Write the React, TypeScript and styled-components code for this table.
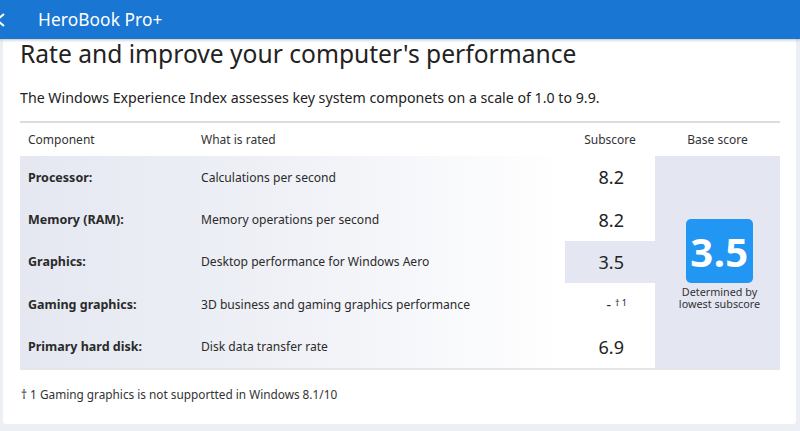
import React from "react";
import styled, { createGlobalStyle } from "styled-components";

const Global = createGlobalStyle`
  html, body { margin: 0; padding: 0; }
  body {
    background: #eceff3;
    font-family: "Noto Sans", "Open Sans", sans-serif;
    color: #222;
    width: 800px;
    height: 431px;
    overflow: hidden;
  }
`;

const Page = styled.div`
  position: relative;
  width: 800px;
  height: 431px;
  display: flex;
  flex-direction: column;
`;

const Header = styled.header`
  position: relative;
  z-index: 2;
  height: 39px;
  background: #1976d2;
  display: flex;
  align-items: center;
  color: #fff;
  box-shadow: 0 1px 3px rgba(0,0,0,0.25);
  flex-shrink: 0;
  overflow: hidden;
`;

const Back = styled.svg`
  width: 12px;
  height: 14px;
  margin-left: -6px;
  margin-right: 32px;
  flex-shrink: 0;
`;

const HeaderTitle = styled.h1`
  margin: 0;
  font-size: 17.3px;
  font-weight: 400;
  letter-spacing: 0.1px;
`;

const Card = styled.main`
  margin: 0 4px 7px 3px;
  background: #fff;
  border-radius: 0 0 3px 3px;
  flex: 1;
  padding: 0 16px 0 17px;
  display: flex;
  flex-direction: column;
`;

const Title = styled.h2`
  margin: 0;
  font-size: 24.6px;
  font-weight: 400;
  line-height: 30px;
  color: #222;
`;

const Lead = styled.p`
  margin: 20px 0 0;
  font-size: 14.2px;
  line-height: 18px;
  color: #222;
`;

const Table = styled.div`
  margin-top: 14px;
  border-top: 2px solid #dcdcdc;
  border-bottom: 2px solid #e6e6e6;
  display: grid;
  grid-template-columns: 173px 372px 90px 125px;
  width: 760px;
`;

const HeadCell = styled.div<{ $center?: boolean }>`
  height: 33px;
  display: flex;
  align-items: center;
  justify-content: ${p => (p.$center ? "center" : "flex-start")};
  padding-left: ${p => (p.$center ? "0" : "8px")};
  font-size: 12px;
  color: #333;
`;

const Body = styled.div`
  grid-column: 1 / 3;
  display: grid;
  grid-template-columns: 173px 372px;
  background: linear-gradient(to right, #e5e8f1 0%, #eef0f6 45%, #ffffff 100%);
`;

const NameCell = styled.div`
  height: 42.4px;
  display: flex;
  align-items: center;
  padding-left: 8px;
  font-size: 12.5px;
  font-weight: 700;
  color: #2a2a2a;
`;

const DescCell = styled.div`
  height: 42.4px;
  display: flex;
  align-items: center;
  padding-left: 8px;
  font-size: 12.1px;
  color: #2a2a2a;
`;

const ScoreCol = styled.div`
  display: flex;
  flex-direction: column;
`;

const ScoreCell = styled.div<{ $hl?: boolean }>`
  height: 42.4px;
  display: flex;
  align-items: center;
  justify-content: flex-end;
  padding-right: 31px;
  font-size: 18px;
  color: #222;
  background: ${p => (p.$hl ? "#e4e6f1" : "transparent")};
`;

const Sup = styled.sup`
  font-size: 9px;
  margin-left: 4px;
  margin-right: -3px;
  position: relative;
  top: -2px;
`;

const Dash = styled.span`
  font-size: 14px;
`;

const BaseCol = styled.div`
  background: #e4e6f1;
  display: flex;
  flex-direction: column;
  align-items: center;
  justify-content: center;
  padding: 5px 0 0 4px;
`;

const Badge = styled.div`
  width: 67px;
  height: 64px;
  border-radius: 5px;
  background: #2196f3;
  color: #fff;
  display: flex;
  align-items: center;
  justify-content: center;
  font-size: 40px;
  font-weight: 700;
  letter-spacing: 0.5px;
`;

const BaseNote = styled.div`
  margin-top: 3px;
  font-size: 10.8px;
  line-height: 11.5px;
  text-align: center;
  color: #333;
`;

const Footnote = styled.p`
  margin: 16px 0 0 1px;
  font-size: 11.8px;
  color: #333;
`;

const rows = [
  { name: "Processor:", desc: "Calculations per second", score: "8.2" },
  { name: "Memory (RAM):", desc: "Memory operations per second", score: "8.2" },
  { name: "Graphics:", desc: "Desktop performance for Windows Aero", score: "3.5", hl: true },
  { name: "Gaming graphics:", desc: "3D business and gaming graphics performance", score: "-", note: true },
  { name: "Primary hard disk:", desc: "Disk data transfer rate", score: "6.9" },
];

export default function App() {
  return (
    <Page>
      <Global />
      <Header>
        <Back viewBox="0 0 12 14" aria-hidden="true">
          <path d="M10 1 L3 7 L10 13" fill="none" stroke="#fff" strokeWidth="2" />
        </Back>
        <HeaderTitle>HeroBook Pro+</HeaderTitle>
      </Header>
      <Card>
        <Title>Rate and improve your computer's performance</Title>
        <Lead>The Windows Experience Index assesses key system componets on a scale of 1.0 to 9.9.</Lead>
        <Table>
          <HeadCell>Component</HeadCell>
          <HeadCell>What is rated</HeadCell>
          <HeadCell $center>Subscore</HeadCell>
          <HeadCell $center>Base score</HeadCell>
          <Body>
            {rows.map(r => (
              <React.Fragment key={r.name}>
                <NameCell>{r.name}</NameCell>
                <DescCell>{r.desc}</DescCell>
              </React.Fragment>
            ))}
          </Body>
          <ScoreCol>
            {rows.map(r => (
              <ScoreCell key={r.name} $hl={r.hl}>
                {r.note ? (
                  <>
                    <Dash>-</Dash>
                    <Sup>† 1</Sup>
                  </>
                ) : (
                  r.score
                )}
              </ScoreCell>
            ))}
          </ScoreCol>
          <BaseCol>
            <Badge>3.5</Badge>
            <BaseNote>
              Determined by
              <br />
              lowest subscore
            </BaseNote>
          </BaseCol>
        </Table>
        <Footnote>† 1 Gaming graphics is not supportted in Windows 8.1/10</Footnote>
      </Card>
    </Page>
  );
}
